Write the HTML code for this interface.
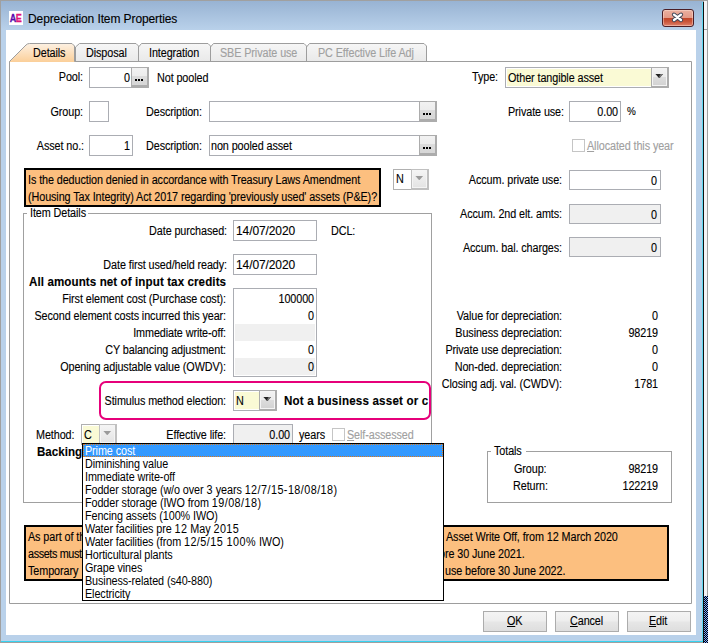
<!DOCTYPE html>
<html><head><meta charset="utf-8">
<style>
*{margin:0;padding:0;box-sizing:border-box}
html,body{width:708px;height:643px;overflow:hidden;background:#f0f0f0}
body{position:relative;font-family:"Liberation Sans",sans-serif;font-size:11px;color:#000}
.a{position:absolute}
.t{position:absolute;font-size:12px;line-height:13px;white-space:nowrap;letter-spacing:-0.1px;transform:scaleX(0.9);transform-origin:0 0;-webkit-text-stroke:0.12px currentColor}
.n{letter-spacing:0.5px}
.r{text-align:right;transform-origin:100% 0}
.b{font-weight:bold;font-size:12px;transform:scaleX(0.965)}
.g{color:#a0a0a0}
.box{position:absolute;border:1px solid #abadb3;background:#fff}
.dis{background:#f0f0f0}
.yel{background:#fafad5;box-shadow:inset 0 0 0 1px #fff}
.eb{position:absolute;background:#acacac}
.eb i{position:absolute;left:1px;top:1px;right:2px;bottom:3px;background:linear-gradient(#f2f2f2 0,#ececec 50%,#dcdcdc 50%,#d6d6d6 100%);}
.dots{position:absolute;left:4px;top:12px;width:8px;height:2px;background:linear-gradient(90deg,#000 0,#000 2px,transparent 2px,transparent 3px,#000 3px,#000 5px,transparent 5px,transparent 6px,#000 6px,#000 8px)}
.arr{position:absolute;left:4px;top:7px;width:8.5px;height:4.3px}
.dd{position:absolute;background:#acacac}
.dd i{position:absolute;left:1px;top:1px;right:2px;bottom:2px;background:linear-gradient(#f2f2f2 0,#ebebeb 50%,#dddddd 50%,#d3d3d3 100%);border:1px solid #f4f4f4}
.btn{position:absolute;border:1px solid #acacac;background:linear-gradient(#f4f4f4 0%,#eeeeee 45%,#e6e6e6 55%,#dedede 100%);text-align:center}
.ob{position:absolute;background:#fcbf7f;border:2px solid #000}
.grp{position:absolute;border:1px solid #d5dfe5;border-color:#a0a0a0}
.cb{position:absolute;border:1px solid #c0c0c0;background:#fff}
</style></head><body>
<!-- outer frame -->
<div class="a" style="left:0;top:0;width:708px;height:643px;background:#a0a0a0"></div>
<div class="a" style="left:1px;top:1px;width:702px;height:641px;background:#b9d1ea"></div>
<div class="a" style="left:1px;top:1px;width:702px;height:29px;background:linear-gradient(#98b3d3,#b9d1ea)"></div>
<div class="a" style="left:702px;top:2px;width:1px;height:640px;background:#5fd8f2"></div>
<div class="a" style="left:1px;top:641px;width:702px;height:1px;background:#36d3f0"></div>
<div class="a" style="left:703px;top:2px;width:1px;height:641px;background:#111"></div>
<div class="a" style="left:704px;top:1px;width:3px;height:595px;background:#f4f4f6"></div>
<div class="a" style="left:704px;top:29px;width:3px;height:1px;background:#a0a0a0"></div>
<div class="a" style="left:704px;top:596px;width:4px;height:47px;background:repeating-conic-gradient(#000 0 25%,#7aa6ff 0 50%) 0 0/2px 2px"></div>
<!-- title -->
<div class="a" style="left:9px;top:11px;width:14px;height:14px;background:#fff"></div>
<div class="a" style="left:9px;top:11px;width:16px;height:14px;font-weight:bold;font-size:11px;line-height:14px;letter-spacing:-0.6px;color:#5a0aae;transform:scaleX(0.82);transform-origin:0 0;padding-left:1px;-webkit-text-stroke:0.3px currentColor">A<span style="color:#e0127a">E</span></div>
<div class="t" style="left:28px;top:12px;font-size:12px;line-height:14px;letter-spacing:-0.1px;color:#000;transform:none">Depreciation Item Properties</div>
<div class="a" style="left:662px;top:9px;width:32px;height:18px;border:1px solid #4b1e26;border-radius:3px;background:linear-gradient(#eab0a0 0,#e39a88 48%,#c2462a 52%,#c9553a 72%,#e0806a 100%);box-shadow:inset 0 0 0 1px rgba(255,230,220,0.45)"></div>
<svg class="a" style="left:668px;top:10px" width="20" height="16" viewBox="0 0 20 16"><path d="M6 4.6 L13 10 M13 4.6 L6 10" stroke="#3d4658" stroke-width="4.2" stroke-linecap="round"/><path d="M6 4.6 L13 10 M13 4.6 L6 10" stroke="#fff" stroke-width="2.3" stroke-linecap="round"/></svg>
<!-- client -->
<div class="a" style="left:6px;top:30px;width:690px;height:605px;background:#fff"></div>

<!-- tabs -->
<svg class="a" style="left:0;top:0" width="708" height="643">
<defs>
<linearGradient id="tsel" x1="0" y1="0" x2="0" y2="1"><stop offset="0" stop-color="#fdf1e3"/><stop offset="1" stop-color="#fbcf99"/></linearGradient>
<linearGradient id="tun" x1="0" y1="0" x2="0" y2="1"><stop offset="0" stop-color="#f6f6f6"/><stop offset="1" stop-color="#e9e9e9"/></linearGradient>
</defs>
<path d="M75.5 61.5 V47 L79.5 43.5 H136 L138.5 46 V61.5" fill="url(#tun)" stroke="#9d9d9d"/>
<path d="M138.5 61.5 V47 L141.5 43.5 H208 L210.5 46 V61.5" fill="url(#tun)" stroke="#9d9d9d"/>
<path d="M210.5 61.5 V47 L213.5 43.5 H304 L306.5 46 V61.5" fill="url(#tun)" stroke="#9d9d9d"/>
<path d="M306.5 61.5 V47 L309.5 43.5 H424 L426.5 46 V61.5" fill="url(#tun)" stroke="#9d9d9d"/>
<path d="M9.5 603.5 V61.5 H691.5 V603.5 Z" fill="#fff" stroke="#9d9d9d"/>
<path d="M9.5 62 L26 45 Q27.5 43.5 29.5 43.5 H72 L74.5 46 V62 Z" fill="url(#tsel)" stroke="none"/>
<path d="M9.5 61.5 L26 45 Q27.5 43.5 29.5 43.5 H72 L74.5 46 V61.5" fill="none" stroke="#9d9d9d"/>
</svg>
<div class="t" style="left:33px;top:47px">Details</div>
<div class="t" style="left:86px;top:47px">Disposal</div>
<div class="t" style="left:149px;top:47px">Integration</div>
<div class="t g" style="left:220px;top:47px">SBE Private use</div>
<div class="t g" style="left:318px;top:47px">PC Effective Life Adj</div>

<!-- row 1 -->
<div class="t r" style="left:0;width:83px;top:71px">Pool:</div>
<div class="box" style="left:89px;top:67px;width:60px;height:21px"></div>
<div class="t r" style="left:89px;width:41px;top:72px">0</div>
<div class="eb" style="left:131px;top:67px;width:18px;height:21px"><i></i><b class="dots"></b></div>
<div class="t" style="left:157px;top:72px">Not pooled</div>
<div class="t" style="left:472px;top:71px">Type:</div>
<div class="box yel" style="left:505px;top:67px;width:164px;height:21px"></div>
<div class="t" style="left:508px;top:72px">Other tangible asset</div>
<div class="dd" style="left:651px;top:67px;width:18px;height:21px"><i></i><svg class="arr" viewBox="0 0 9 5"><path d="M0 0 H9 L4.5 5 Z" fill="#222"/><path d="M4.5 5 L9 0 H6 L4.5 3 Z" fill="#777"/></svg></div>
<!-- row 2 -->
<div class="t r" style="left:0;width:83px;top:106px">Group:</div>
<div class="box" style="left:89px;top:101px;width:20px;height:21px"></div>
<div class="t" style="left:146px;top:106px">Description:</div>
<div class="box" style="left:209px;top:101px;width:228px;height:21px"></div>
<div class="eb" style="left:419px;top:101px;width:18px;height:21px"><i></i><b class="dots"></b></div>
<div class="t" style="left:508px;top:106px">Private use:</div>
<div class="box" style="left:569px;top:101px;width:52px;height:21px"></div>
<div class="t r" style="left:569px;width:49px;top:106px">0.00</div>
<div class="t" style="left:627px;top:105px;font-size:11px">%</div>
<!-- row 3 -->
<div class="t r" style="left:0;width:84px;top:140px">Asset no.:</div>
<div class="box" style="left:89px;top:135px;width:44px;height:21px"></div>
<div class="t r" style="left:89px;width:41px;top:140px">1</div>
<div class="t" style="left:146px;top:140px">Description:</div>
<div class="box" style="left:209px;top:135px;width:228px;height:21px"></div>
<div class="t" style="left:211px;top:140px">non pooled asset</div>
<div class="eb" style="left:419px;top:135px;width:18px;height:21px"><i></i><b class="dots"></b></div>
<div class="cb" style="left:572px;top:139px;width:13px;height:13px;border-color:#c5c5c5"></div>
<div class="t g" style="left:587px;top:140px"><u>A</u>llocated this year</div>
<!-- orange box 1 -->
<div class="ob" style="left:24px;top:168px;width:357px;height:39px"></div>
<div class="t" style="left:28px;top:172px;line-height:17px">Is the deduction denied in accordance with Treasury Laws Amendment<br>(Housing Tax Integrity) Act 2017 regarding 'previously used' assets (P&amp;E)?</div>
<div class="box" style="left:393px;top:169px;width:36px;height:21px;border-color:#b0b0b0"></div>
<div class="t" style="left:396px;top:173px">N</div>
<div class="dd" style="left:411px;top:169px;width:18px;height:21px;background:#c0c0c0"><i style="background:linear-gradient(#f4f4f4,#e4e4e4)"></i><svg class="arr" viewBox="0 0 9 5"><path d="M0 0 H9 L4.5 5 Z" fill="#9a9a9a"/></svg></div>
<!-- accum -->
<div class="t r" style="left:0;width:562px;top:174px">Accum. private use:</div>
<div class="box" style="left:569px;top:170px;width:92px;height:20px"></div>
<div class="t r" style="left:569px;width:88px;top:175px">0</div>
<div class="t r" style="left:0;width:562px;top:208px">Accum. 2nd elt. amts:</div>
<div class="box dis" style="left:569px;top:204px;width:92px;height:20px"></div>
<div class="t r" style="left:569px;width:88px;top:209px">0</div>
<div class="t r" style="left:0;width:562px;top:242px">Accum. bal. charges:</div>
<div class="box dis" style="left:569px;top:237px;width:92px;height:20px"></div>
<div class="t r" style="left:569px;width:88px;top:242px">0</div>
<!-- item details group -->
<div class="grp" style="left:23px;top:213px;width:409px;height:290px"></div>
<div class="a" style="left:27px;top:212px;width:61px;height:4px;background:#fff"></div><div class="t" style="left:30px;top:207px">Item Details</div>
<div class="t r" style="left:0;width:227px;top:225px">Date purchased:</div>
<div class="box" style="left:233px;top:220px;width:84px;height:21px"></div>
<div class="t" style="left:236px;top:225px;transform:none">14/07/2020</div>
<div class="t" style="left:331px;top:225px">DCL:</div>
<div class="t r" style="left:0;width:227px;top:259px">Date first used/held ready:</div>
<div class="box" style="left:233px;top:254px;width:84px;height:21px"></div>
<div class="t" style="left:236px;top:259px;transform:none">14/07/2020</div>
<div class="t b" style="left:29px;top:276px;letter-spacing:0.1px">All amounts net of input tax credits</div>
<div class="box" style="left:233px;top:288px;width:84px;height:89px"></div>
<div class="a" style="left:235px;top:324px;width:80px;height:17px;background:#f0f0f0"></div>
<div class="a" style="left:235px;top:358px;width:80px;height:17px;background:#f0f0f0"></div>
<div class="t r" style="left:0;width:226px;top:293px">First element cost (Purchase cost):</div>
<div class="t r" style="left:0;width:226px;top:310px">Second element costs incurred this year:</div>
<div class="t r" style="left:0;width:226px;top:327px">Immediate write-off:</div>
<div class="t r" style="left:0;width:226px;top:344px">CY balancing adjustment:</div>
<div class="t r" style="left:0;width:226px;top:361px">Opening adjustable value (OWDV):</div>
<div class="t r" style="left:233px;width:81px;top:293px">100000</div>
<div class="t r" style="left:233px;width:81px;top:310px">0</div>
<div class="t r" style="left:233px;width:81px;top:344px">0</div>
<div class="t r" style="left:233px;width:81px;top:361px">0</div>
<!-- stimulus -->
<div class="a" style="left:99px;top:381px;width:332px;height:39px;border:2px solid #e6007a;border-radius:7px"></div>
<div class="t r" style="left:0;width:226px;top:395px">Stimulus method election:</div>
<div class="box yel" style="left:233px;top:390px;width:44px;height:21px"></div>
<div class="t" style="left:236px;top:395px">N</div>
<div class="dd" style="left:259px;top:390px;width:18px;height:21px"><i></i><svg class="arr" viewBox="0 0 9 5"><path d="M0 0 H9 L4.5 5 Z" fill="#222"/><path d="M4.5 5 L9 0 H6 L4.5 3 Z" fill="#777"/></svg></div>
<div class="t b" style="left:284px;top:395px;letter-spacing:0.2px">Not a business asset or c</div>
<!-- method -->
<div class="t" style="left:36px;top:429px">Method:</div>
<div class="box yel" style="left:81px;top:424px;width:36px;height:21px;border-color:#b0b0b0"></div>
<div class="t" style="left:84px;top:429px">C</div>
<div class="dd" style="left:99px;top:424px;width:18px;height:21px;background:#c0c0c0"><i style="background:linear-gradient(#f4f4f4,#e4e4e4)"></i><svg class="arr" viewBox="0 0 9 5"><path d="M0 0 H9 L4.5 5 Z" fill="#9a9a9a"/></svg></div>
<div class="t r" style="left:0;width:226px;top:429px">Effective life:</div>
<div class="box dis" style="left:233px;top:424px;width:60px;height:21px"></div>
<div class="t r" style="left:233px;width:57px;top:429px">0.00</div>
<div class="t" style="left:299px;top:429px">years</div>
<div class="cb" style="left:332px;top:428px;width:13px;height:13px;border-color:#c5c5c5"></div>
<div class="t g" style="left:347px;top:429px"><u>S</u>elf-assessed</div>
<div class="t b" style="left:37px;top:446px;letter-spacing:0px">Backing</div>
<!-- right values -->
<div class="t r" style="left:0;width:562px;top:310px">Value for depreciation:</div>
<div class="t r" style="left:0;width:562px;top:327px">Business depreciation:</div>
<div class="t r" style="left:0;width:562px;top:344px">Private use depreciation:</div>
<div class="t r" style="left:0;width:562px;top:361px">Non-ded. depreciation:</div>
<div class="t r" style="left:0;width:562px;top:378px">Closing adj. val. (CWDV):</div>
<div class="t r" style="left:0;width:658px;top:310px">0</div>
<div class="t r" style="left:0;width:658px;top:327px">98219</div>
<div class="t r" style="left:0;width:658px;top:344px">0</div>
<div class="t r" style="left:0;width:658px;top:361px">0</div>
<div class="t r" style="left:0;width:658px;top:378px">1781</div>
<!-- totals -->
<div class="grp" style="left:487px;top:451px;width:185px;height:52px"></div>
<div class="a" style="left:491px;top:449px;width:35px;height:4px;background:#fff"></div><div class="t" style="left:494px;top:445px">Totals</div>
<div class="t" style="left:514px;top:463px">Group:</div>
<div class="t r" style="left:0;width:658px;top:463px">98219</div>
<div class="t" style="left:513px;top:480px">Return:</div>
<div class="t r" style="left:0;width:658px;top:480px">122219</div>
<!-- orange box 2 -->
<div class="ob" style="left:24px;top:525px;width:645px;height:56px"></div>
<div class="t" style="left:28px;top:531px">As part of th</div><div class="t" style="left:28px;top:548px;letter-spacing:-0.4px">assets must</div><div class="t" style="left:28px;top:565px">Temporary</div>
<div class="t" style="left:446px;top:531px">Asset Write Off, from 12 March 2020</div><div class="t" style="left:439px;top:548px">ore 30 June 2021.</div><div class="t" style="left:445px;top:565px">use before 30 June 2022.</div>
<!-- buttons -->
<div class="btn" style="left:483px;top:611px;width:64px;height:21px"></div>
<div class="t" style="left:507px;top:615px"><u>O</u>K</div>
<div class="btn" style="left:555px;top:611px;width:64px;height:21px"></div>
<div class="t" style="left:570px;top:615px"><u>C</u>ancel</div>
<div class="btn" style="left:627px;top:611px;width:64px;height:21px"></div>
<div class="t" style="left:649px;top:615px"><u>E</u>dit</div>
<!-- dropdown list -->
<div class="a" style="left:82px;top:443px;width:362px;height:158px;border:1px solid #000;background:#fff"></div>
<div class="a" style="left:83px;top:444px;width:360px;height:13px;background:#3399ff;border:1px dotted #e07818"></div>
<div class="t" style="left:85px;top:445px;line-height:13px;-webkit-text-stroke:0"><span style="color:#fff">Prime cost</span><br>Diminishing value<br>Immediate write-off<br>Fodder storage (w/o over <span class="n">3</span> years <span class="n">12/7/15-18/08/18</span>)<br>Fodder storage (IWO from <span class="n">19/08/18</span>)<br>Fencing assets (100% IWO)<br>Water facilities pre <span class="n">12</span> May <span class="n">2015</span><br>Water facilities (from <span class="n">12/5/15 100%</span> IWO)<br>Horticultural plants<br>Grape vines<br>Business-related (s40-880)<br>Electricity</div>
</body></html>
